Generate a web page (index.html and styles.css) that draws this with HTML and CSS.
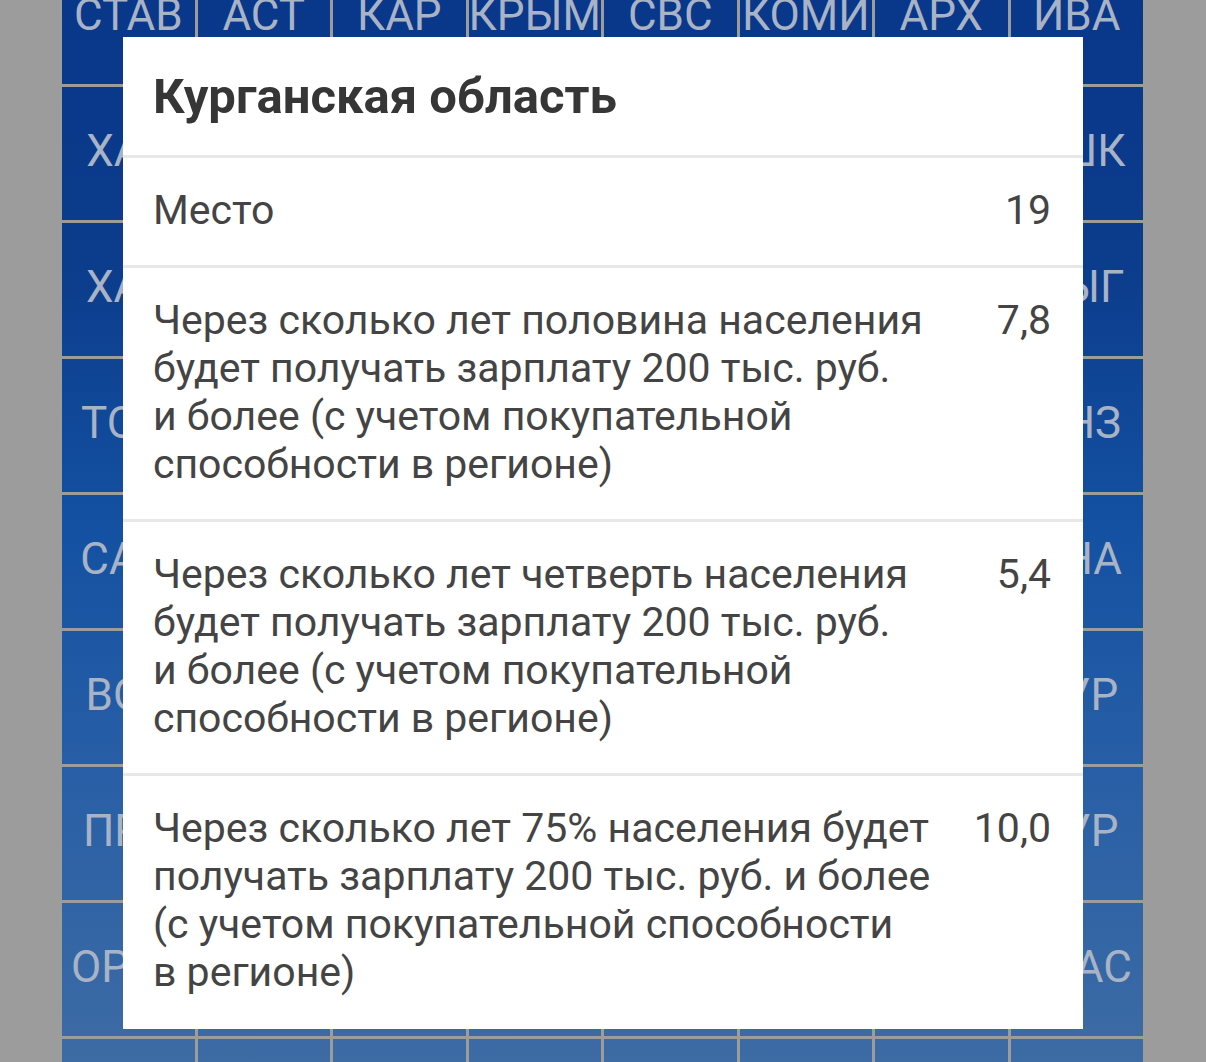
FILE: index.html
```html
<!DOCTYPE html>
<html lang="ru">
<head>
<meta charset="utf-8">
<title>Курганская область</title>
<link rel="stylesheet" href="styles.css">
</head>
<body>
<div class="board">
  <div class="tile">СТАВ</div><div class="tile">АСТ</div><div class="tile">КАР</div><div class="tile">КРЫМ</div><div class="tile">СВС</div><div class="tile">КОМИ</div><div class="tile">АРХ</div><div class="tile">ИВА</div>
  <div class="tile">ХАБ</div><div class="tile">ТУЛ</div><div class="tile">ЯРО</div><div class="tile">КЛГ</div><div class="tile">ТВЕ</div><div class="tile">ВЛА</div><div class="tile">КОС</div><div class="tile">БШК</div>
  <div class="tile">ХАК</div><div class="tile">ОРЛ</div><div class="tile">БРЯ</div><div class="tile">СМО</div><div class="tile">КУР</div><div class="tile">ЛИП</div><div class="tile">ТАМ</div><div class="tile">ДЫГ</div>
  <div class="tile">ТОМ</div><div class="tile">ВОЛ</div><div class="tile">НОВ</div><div class="tile">ПСК</div><div class="tile">МУР</div><div class="tile">КАЛ</div><div class="tile">РЯЗ</div><div class="tile">ПНЗ</div>
  <div class="tile">САМ</div><div class="tile">САР</div><div class="tile">УЛЬ</div><div class="tile">ЧУВ</div><div class="tile">МАР</div><div class="tile">МОР</div><div class="tile">ТАТ</div><div class="tile">ЧНА</div>
  <div class="tile">ВОР</div><div class="tile">БЕЛ</div><div class="tile">РОС</div><div class="tile">ВГГ</div><div class="tile">КБР</div><div class="tile">КЧР</div><div class="tile">ОСЕ</div><div class="tile">БУР</div>
  <div class="tile">ПРИ</div><div class="tile">ЧЕЧ</div><div class="tile">ИНГ</div><div class="tile">ДАГ</div><div class="tile">КАЛМ</div><div class="tile">ТЫВА</div><div class="tile">АЛТ</div><div class="tile">КУР</div>
  <div class="tile">ОРЕН</div><div class="tile">ЧЕЛ</div><div class="tile">СВЕ</div><div class="tile">ТЮМ</div><div class="tile">ОМС</div><div class="tile">НСО</div><div class="tile">КЕМ</div><div class="tile">КРАС</div>
  <div class="tile">ИРК</div><div class="tile">ЗАБ</div><div class="tile">ЯКУ</div><div class="tile">ЕАО</div><div class="tile">МАГ</div><div class="tile">КАМ</div><div class="tile">САХ</div><div class="tile">ЧУК</div>
</div>

<div class="dialog">
  <div class="dialog-head">
    <h1 class="dialog-title">Курганская область</h1>
  </div>
  <div class="row">
    <div class="row-label">Место</div>
    <div class="row-value">19</div>
  </div>
  <div class="row">
    <div class="row-label">Через сколько лет половина населения будет получать зарплату 200 тыс. руб. и&nbsp;более (с&nbsp;учетом покупательной способности в&nbsp;регионе)</div>
    <div class="row-value">7,8</div>
  </div>
  <div class="row">
    <div class="row-label">Через сколько лет четверть населения будет получать зарплату 200 тыс. руб. и&nbsp;более (с&nbsp;учетом покупательной способности в&nbsp;регионе)</div>
    <div class="row-value">5,4</div>
  </div>
  <div class="row">
    <div class="row-label">Через сколько лет 75% населения будет получать зарплату 200 тыс. руб. и&nbsp;более (с&nbsp;учетом покупательной способности в&nbsp;регионе)</div>
    <div class="row-value">10,0</div>
  </div>
</div>
</body>
</html>
```

FILE: styles.css
```css
html, body {
  margin: 0;
  padding: 0;
}

body {
  width: 1206px;
  height: 1062px;
  overflow: hidden;
  background: #9c9c9c;
  font-family: Roboto, "Noto Sans", "Liberation Sans", sans-serif;
  position: relative;
}

.board {
  width: 1081px;
  margin: -49px 0 0 62px;
  display: grid;
  grid-template-columns: repeat(8, 1fr);
  grid-auto-rows: 133px;
  gap: 3px;
}

.tile {
  display: flex;
  align-items: center;
  justify-content: center;
  padding-bottom: 6px;
  box-sizing: border-box;
  color: #a9b3c6;
  font-size: 44px;
  background: linear-gradient(180deg, #09378a 0%, #0c3c8c 25%, #1451a2 50%, #2a60a6 75%, #3d6ba4 100%) fixed;
}

.dialog {
  position: absolute;
  left: 123px;
  top: 37px;
  width: 960px;
  height: 992px;
  background: #ffffff;
  color: #444444;
}

.dialog-head {
  padding: 35px 32px 33px 30px;
  border-bottom: 3px solid #e8e8e8;
}

.dialog-title {
  margin: 0;
  font-size: 49px;
  line-height: 50px;
  font-weight: 700;
  color: #363636;
}

.row {
  display: grid;
  grid-template-columns: 1fr auto;
  column-gap: 30px;
  align-items: start;
  padding: 28px 32px 31px 30px;
  font-size: 41px;
  line-height: 48px;
  border-bottom: 3px solid #e8e8e8;
}

.row:last-child {
  border-bottom: none;
}

.row-value {
  text-align: right;
}
```
